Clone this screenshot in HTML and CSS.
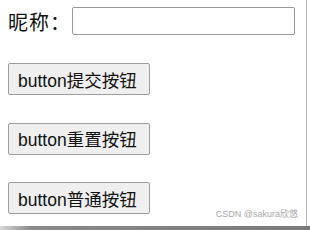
FILE: index.html
```html
<!DOCTYPE html>
<html>
<head>
<meta charset="utf-8">
<link rel="stylesheet" href="styles.css">
</head>
<body>
<div class="frame">
  <div class="content">
    <div class="row">
      <label class="label">昵称：</label>
      <input class="field" type="text">
    </div>
    <div class="buttons">
      <button class="btn" type="submit">button提交按钮</button>
      <button class="btn" type="reset">button重置按钮</button>
      <button class="btn" type="button">button普通按钮</button>
    </div>
  </div>
  <div class="watermark">CSDN @sakura欣悠</div>
</div>
<div class="shadow"></div>
</body>
</html>
```
FILE: styles.css
```css
html, body {
  margin: 0;
  padding: 0;
  background: #ffffff;
  width: 310px;
  height: 230px;
  overflow: hidden;
}
.frame {
  position: relative;
  width: 306px;
  height: 226px;
  border-right: 1px solid #b5b5b5;
  box-sizing: content-box;
}
.content {
  display: flex;
  flex-direction: column;
  padding: 7px 0 0 8px;
}
.row {
  display: flex;
  align-items: center;
  height: 28px;
}
.label {
  font-family: "Noto Sans CJK SC", "Liberation Sans", sans-serif;
  font-size: 20px;
  color: #111;
  width: 64px;
  letter-spacing: 1px;
  white-space: nowrap;
}
.field {
  width: 223px;
  height: 28px;
  box-sizing: border-box;
  border: 1px solid #9a9a9a;
  border-radius: 2px;
  margin: 0;
  padding: 0 4px;
  background: #fff;
}
.buttons {
  display: flex;
  flex-direction: column;
  align-items: flex-start;
  gap: 27.5px;
  margin-top: 28px;
}
.btn {
  height: 32px;
  width: 142px;
  box-sizing: border-box;
  margin: 0;
  padding: 0 9px;
  background: #efefef;
  border: 1px solid #9d9d9d;
  border-radius: 2px;
  font-family: "Liberation Sans", "Noto Sans CJK SC", sans-serif;
  font-size: 17.5px;
  color: #111;
  white-space: nowrap;
  text-align: left;
}
.watermark {
  position: absolute;
  right: 8px;
  bottom: 6px;
  font-family: "Liberation Sans", "Noto Sans CJK SC", sans-serif;
  font-size: 9px;
  color: #a8a8a8;
  white-space: nowrap;
}
.shadow {
  width: 310px;
  height: 4px;
  background: linear-gradient(to right, #d8d8d8 0%, #8a8a8a 10%, #7a7a7a 100%);
}
```
